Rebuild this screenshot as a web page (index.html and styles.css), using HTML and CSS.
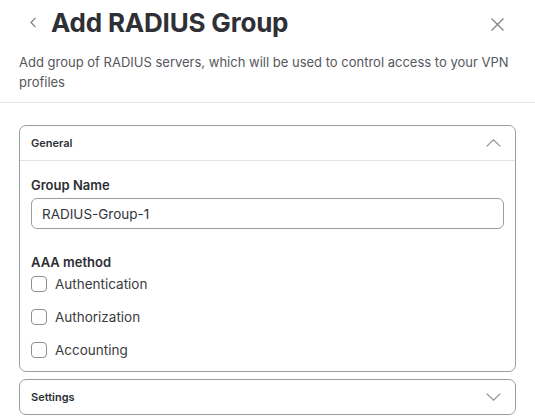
FILE: index.html
```html
<!DOCTYPE html>
<html lang="en">
<head>
    <meta charset="UTF-8">
    <meta name="viewport" content="width=device-width, initial-scale=1.0">
    <title>Add RADIUS Group</title>
    <link rel="stylesheet" href="styles.css">
</head>
<body>
    <div class="panel-header">
        <button class="icon-btn back-btn" aria-label="Back">
            <svg width="7" height="11" viewBox="0 0 7 11"><path d="M5.5 0.8 L1 5.5 L5.5 10.2" fill="none" stroke="#7b7f88" stroke-width="1.2"/></svg>
        </button>
        <h1 class="title">Add RADIUS Group</h1>
        <button class="icon-btn close-btn" aria-label="Close">
            <svg width="13" height="13" viewBox="0 0 13 13"><path d="M0.5 0.5 L12.5 12.5 M12.5 0.5 L0.5 12.5" fill="none" stroke="#7b7f88" stroke-width="1.2"/></svg>
        </button>
    </div>
    <p class="subtitle">Add group of RADIUS servers, which will be used to control access to your VPN profiles</p>
    <div class="divider"></div>

    <div class="sections">
        <div class="section open">
            <div class="section-head">
                <span>General</span>
                <svg width="15" height="8" viewBox="0 0 15 8"><path d="M0.7 7.3 L7.5 0.8 L14.3 7.3" fill="none" stroke="#8a8d94" stroke-width="1.1"/></svg>
            </div>
            <div class="section-body">
                <label class="field-label" for="groupName">Group Name</label>
                <input class="text-input" type="text" id="groupName" value="RADIUS-Group-1">

                <div class="field-label aaa-label">AAA method</div>
                <div class="checks">
                    <label class="check"><input type="checkbox"><span class="box"></span>Authentication</label>
                    <label class="check"><input type="checkbox"><span class="box"></span>Authorization</label>
                    <label class="check"><input type="checkbox"><span class="box"></span>Accounting</label>
                </div>
            </div>
        </div>

        <div class="section">
            <div class="section-head">
                <span>Settings</span>
                <svg width="15" height="8" viewBox="0 0 15 8"><path d="M0.7 0.7 L7.5 7.2 L14.3 0.7" fill="none" stroke="#8a8d94" stroke-width="1.1"/></svg>
            </div>
        </div>
    </div>
</body>
</html>
```

FILE: styles.css
```css
body {
    margin: 0;
    font-family: Inter, "Noto Sans", sans-serif;
    color: #2c2e33;
    background: #fff;
}
.panel-header {
    display: flex;
    align-items: center;
    height: 44px;
    padding: 0 31px 0 30px;
}
.icon-btn {
    background: none;
    border: none;
    padding: 0;
    display: flex;
    cursor: pointer;
}
.back-btn {
    margin-right: 14px;
}
.close-btn {
    margin-left: auto;
    margin-top: 4px;
}
.title {
    margin: 0;
    font-size: 26px;
    font-weight: 700;
    letter-spacing: -0.2px;
    color: #2e3036;
}
.subtitle {
    margin: 8px 19px 0;
    font-size: 13px;
    line-height: 20px;
    color: #55575c;
}
.divider {
    margin-top: 10px;
    border-top: 1px solid #e4e5e9;
}
.sections {
    display: flex;
    flex-direction: column;
    gap: 7px;
    padding: 22px 19px 0;
}
.section {
    border: 1px solid #9a9da4;
    border-radius: 7px;
}
.section-head {
    display: flex;
    align-items: center;
    justify-content: space-between;
    height: 34px;
    padding: 0 14px 0 11px;
    font-size: 11px;
    font-weight: 600;
    color: #2c2e33;
}
.section.open .section-head {
    border-bottom: 1px solid #e1e2e6;
}
.section-body {
    display: flex;
    flex-direction: column;
    padding: 15px 11px 10px;
}
.field-label {
    font-size: 13px;
    font-weight: 600;
    line-height: 18px;
    color: #2c2e33;
}
.text-input {
    margin-top: 4px;
    height: 31px;
    box-sizing: border-box;
    border: 1px solid #9a9da4;
    border-radius: 6px;
    padding: 0 10px;
    font-family: inherit;
    font-size: 13.5px;
    color: #33353a;
}
.aaa-label {
    margin-top: 24px;
}
.checks {
    display: flex;
    flex-direction: column;
    gap: 11px;
    margin-top: 2px;
}
.check {
    display: flex;
    align-items: center;
    height: 22px;
    font-size: 13.5px;
    color: #3a3c41;
}
.check input {
    display: none;
}
.check .box {
    width: 14px;
    height: 14px;
    border: 1px solid #8d9097;
    border-radius: 4px;
    margin-right: 8px;
}
```
